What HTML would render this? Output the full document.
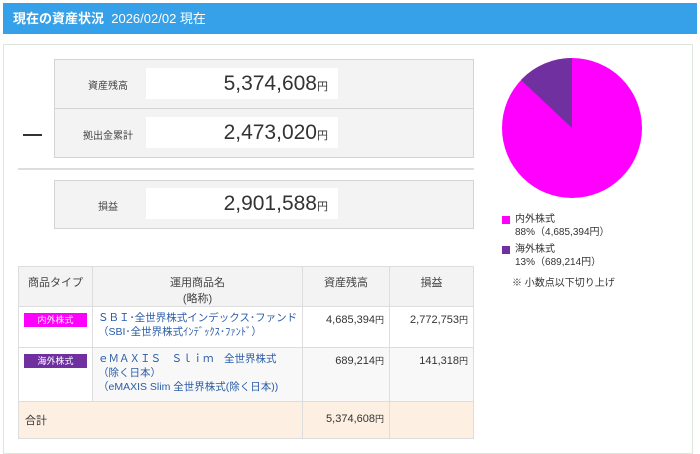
<!DOCTYPE html>
<html><head><meta charset="utf-8"><style>
*{margin:0;padding:0;box-sizing:border-box}
body{width:700px;height:447px;background:#fff;font-family:"Liberation Sans","Noto Sans CJK JP",sans-serif;color:#333;position:relative;overflow:hidden;font-size:11px}
.a{position:absolute}
.hdr{left:3px;top:3px;width:694px;height:31px;background:#36a0e8;color:#fff;font-size:13px;line-height:31px;padding-left:10px}
.wrap{left:3px;top:44px;width:690px;height:410px;border:1px solid #dde6dd}
.box{background:#f3f3f3;border:1px solid #d4d4d4}
.lbl{font-size:10px;color:#444;text-align:center;width:90px}
.val{background:#fff;text-align:right;font-size:21px;color:#333;padding-right:10px;line-height:31px}
.val small{font-size:11px}
table{border-collapse:collapse;position:absolute;left:18px;top:266px;width:456px;table-layout:fixed}
td,th{border:1px solid #ddd;font-size:11px;font-weight:normal;vertical-align:top}
th{background:#f3f3f3;text-align:center;padding-top:7px;height:40px;color:#444}
td.n{text-align:right;padding:6px 5px 0 0;color:#333}
td.n small{font-size:9px}
.tag{display:inline-block;width:63px;height:14px;color:#fff;font-size:9px;text-align:center;line-height:14px;margin:6px 0 0 5px}
.lk{color:#2a5ca8;padding:4px 0 0 5px;line-height:14px;white-space:nowrap;overflow:hidden;font-size:10.5px}
</style></head><body>
<div class="a hdr"><b>現在の資産状況</b>&nbsp; 2026/02/02 現在</div>
<div class="a wrap"></div>
<div class="a box" style="left:54px;top:59px;width:420px;height:99px"></div>
<div class="a" style="left:54px;top:108px;width:420px;height:1px;background:#d4d4d4"></div>
<div class="a lbl" style="left:63px;top:77px">資産残高</div>
<div class="a val" style="left:146px;top:68px;width:192px;height:31px">5,374,608<small>円</small></div>
<div class="a lbl" style="left:63px;top:127px">拠出金累計</div>
<div class="a val" style="left:146px;top:117px;width:192px;height:31px">2,473,020<small>円</small></div>
<div class="a" style="left:23px;top:134px;width:19px;height:2px;background:#333"></div>
<div class="a" style="left:18px;top:168px;width:456px;height:2px;background:#ddd"></div>
<div class="a box" style="left:54px;top:180px;width:420px;height:49px"></div>
<div class="a lbl" style="left:63px;top:198px">損益</div>
<div class="a val" style="left:146px;top:188px;width:192px;height:31px">2,901,588<small>円</small></div>
<table>
<tr><th style="width:74px">商品タイプ</th><th style="width:210px">運用商品名<br>(略称)</th><th style="width:87px">資産残高</th><th>損益</th></tr>
<tr style="height:41px"><td><span class="tag" style="background:#f0f">内外株式</span></td><td class="lk">ＳＢＩ･全世界株式インデックス･ファンド<br>（SBI･全世界株式ｲﾝﾃﾞｯｸｽ･ﾌｧﾝﾄﾞ）</td><td class="n">4,685,394<small>円</small></td><td class="n">2,772,753<small>円</small></td></tr>
<tr style="height:54px;background:#f8f8f8"><td style="background:#fff"><span class="tag" style="background:#7030a0">海外株式</span></td><td class="lk">ｅＭＡＸＩＳ　Ｓｌｉｍ　全世界株式<br>（除く日本）<br>（eMAXIS Slim 全世界株式(除く日本))</td><td class="n">689,214<small>円</small></td><td class="n">141,318<small>円</small></td></tr>
<tr style="height:37px;background:#fdf0e2"><td colspan="2" style="padding:10px 0 0 6px;vertical-align:top">合計</td><td class="n" style="padding-top:10px">5,374,608<small>円</small></td><td></td></tr>
</table>
<svg class="a" style="left:500px;top:56px" width="146" height="146" viewBox="0 0 146 146">
<circle cx="72" cy="72" r="70" fill="#ff00ff"/>
<path d="M72 72 L72 2 A70 70 0 0 0 21 24 Z" fill="#7030a0"/>
</svg>
<div class="a" style="left:502px;top:216px;width:8px;height:8px;background:#f0f"></div>
<div class="a" style="left:515px;top:213px;font-size:10px;line-height:13px">内外株式<br>88%（4,685,394円）</div>
<div class="a" style="left:502px;top:246px;width:8px;height:8px;background:#7030a0"></div>
<div class="a" style="left:515px;top:243px;font-size:10px;line-height:13px">海外株式<br>13%（689,214円）</div>
<div class="a" style="left:512px;top:274px;font-size:10px">※ 小数点以下切り上げ</div>
</body></html>
